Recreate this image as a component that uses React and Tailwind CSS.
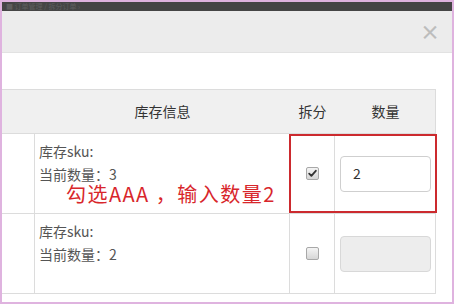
import React from 'react';

const font = { fontFamily: '"Noto Sans CJK SC", "Liberation Sans", sans-serif' };

function Checkbox({ checked }) {
  return (
    <span className="inline-flex h-[13px] w-[13px] items-center justify-center rounded-[2px] border border-[#a8a8a8] bg-gradient-to-b from-[#f4f4f4] to-[#d6d6d6]">
      {checked && (
        <svg width="9" height="9" viewBox="0 0 9 9">
          <path d="M1.2 4.6 L3.4 6.9 L7.8 1.8" fill="none" stroke="#333" strokeWidth="1.8" strokeLinecap="round" strokeLinejoin="round" />
        </svg>
      )}
    </span>
  );
}

function StockRow({ qty, checked, value }) {
  return (
    <div className="grid h-[80px] grid-cols-[33px_255px_45px_101px] border-b border-[#dcdcdc]">
      <div className="border-r border-[#dcdcdc]" />
      <div className="flex flex-col gap-[5px] border-r border-[#dcdcdc] pl-[4px] pt-[8px] text-[14px] leading-[18px] text-[#555]">
        <div>库存sku:</div>
        <div>当前数量：{qty}</div>
      </div>
      <div className="flex items-center justify-center border-r border-[#dcdcdc]">
        <Checkbox checked={checked} />
      </div>
      <div className="flex items-center px-[5px]">
        {checked ? (
          <div className="flex h-[36px] w-[91px] items-center rounded-[4px] border border-[#cfcfcf] bg-white pl-[12px] text-[14px] text-[#333]">
            {value}
          </div>
        ) : (
          <div className="h-[36px] w-[91px] rounded-[4px] border border-[#d8d8d8] bg-[#ededed]" />
        )}
      </div>
    </div>
  );
}

export default function App() {
  return (
    <div className="h-[304px] w-[454px] overflow-hidden bg-[#dfb3df] p-[2px]" style={font}>
      <div className="flex h-full flex-col bg-white">
        {/* top dark strip */}
        <div className="flex h-[9px] items-center bg-[#454545] pl-[4px] text-[7px] leading-none text-[#5e5e5e]">
          <span>■ 订单管理 / 拆分订单 ›</span>
        </div>

        {/* modal header */}
        <div className="flex h-[42px] items-center justify-end border-b border-[#e2e2e2] bg-[#ececec] pr-[12px]">
          <span className="text-[20px] font-bold leading-none text-[#bdbdbd]">×</span>
        </div>

        {/* body */}
        <div className="flex-1 pr-[16px] pt-[36px]">
          <div className="relative w-[434px]">
            <div className="grid h-[45px] grid-cols-[33px_255px_45px_101px] items-center border-y border-r border-[#dcdcdc] bg-[#f0f0f0] text-[14px] text-[#333]">
              <div />
              <div className="text-center">库存信息</div>
              <div className="text-center">拆分</div>
              <div className="text-center">数量</div>
            </div>
            <div className="border-r border-[#dcdcdc]">
              <StockRow qty={3} checked value="2" />
              <StockRow qty={2} checked={false} />
            </div>

            {/* annotation */}
            <div className="absolute left-[287px] top-[45px] h-[79px] w-[148px] border-2 border-[#cc2a2e]" />
            <div className="absolute left-[64px] top-[95px] text-[20px] leading-[20px] tracking-[1.5px] text-[#d8262b]">
              勾选AAA ，输入数量2
            </div>
          </div>
        </div>
      </div>
    </div>
  );
}
